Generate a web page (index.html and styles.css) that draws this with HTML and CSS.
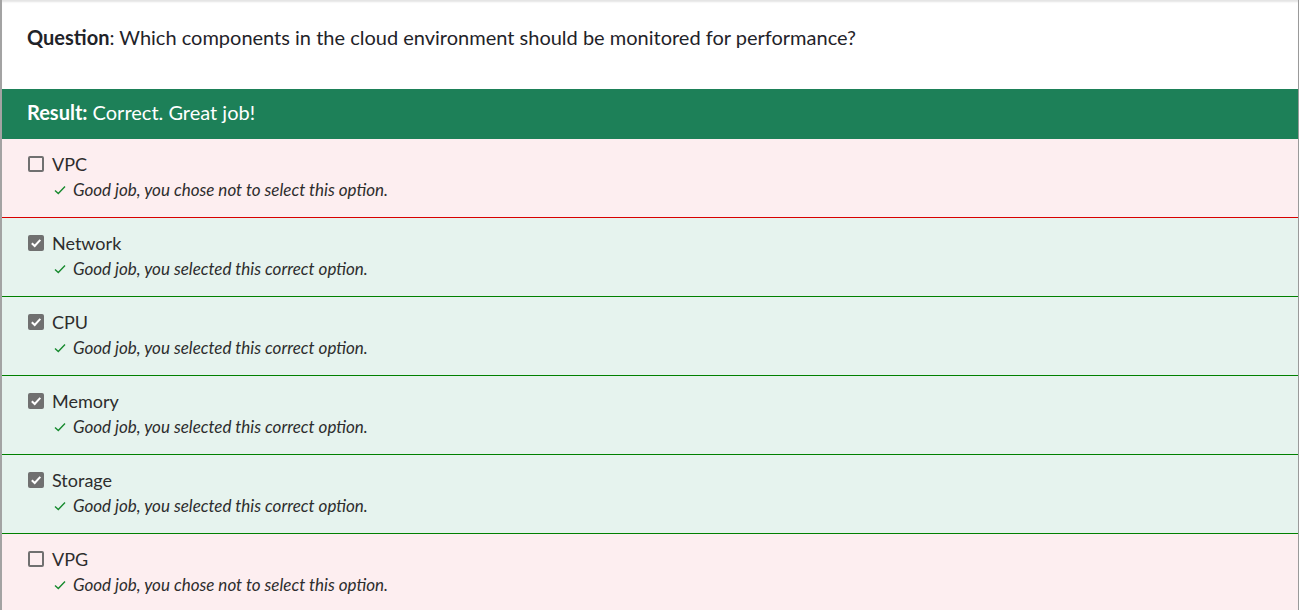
FILE: index.html
```html
<!DOCTYPE html>
<html>
<head>
<meta charset="utf-8">
<link rel="stylesheet" href="styles.css">
</head>
<body>
<div class="quiz">
  <div class="question"><strong>Question</strong>: Which components in the cloud environment should be monitored for performance?</div>
  <div class="result"><strong>Result:</strong> Correct. Great job!</div>
  <ul class="options">
    <li class="option wrong">
      <div class="label"><span class="box"></span>VPC</div>
      <div class="feedback"><svg class="tick" viewBox="0 0 12 10" width="12" height="10"><path d="M1 5.5 L4.3 8.5 L11 1.5" fill="none" stroke="#178a2e" stroke-width="1.4"/></svg>Good job, you chose not to select this option.</div>
    </li>
    <li class="option right">
      <div class="label"><span class="box checked"><svg viewBox="0 0 16 16" width="16" height="16"><path d="M3.8 8.2 L6.7 11 L12.3 4.9" fill="none" stroke="#fff" stroke-width="2"/></svg></span>Network</div>
      <div class="feedback"><svg class="tick" viewBox="0 0 12 10" width="12" height="10"><path d="M1 5.5 L4.3 8.5 L11 1.5" fill="none" stroke="#178a2e" stroke-width="1.4"/></svg>Good job, you selected this correct option.</div>
    </li>
    <li class="option right">
      <div class="label"><span class="box checked"><svg viewBox="0 0 16 16" width="16" height="16"><path d="M3.8 8.2 L6.7 11 L12.3 4.9" fill="none" stroke="#fff" stroke-width="2"/></svg></span>CPU</div>
      <div class="feedback"><svg class="tick" viewBox="0 0 12 10" width="12" height="10"><path d="M1 5.5 L4.3 8.5 L11 1.5" fill="none" stroke="#178a2e" stroke-width="1.4"/></svg>Good job, you selected this correct option.</div>
    </li>
    <li class="option right">
      <div class="label"><span class="box checked"><svg viewBox="0 0 16 16" width="16" height="16"><path d="M3.8 8.2 L6.7 11 L12.3 4.9" fill="none" stroke="#fff" stroke-width="2"/></svg></span>Memory</div>
      <div class="feedback"><svg class="tick" viewBox="0 0 12 10" width="12" height="10"><path d="M1 5.5 L4.3 8.5 L11 1.5" fill="none" stroke="#178a2e" stroke-width="1.4"/></svg>Good job, you selected this correct option.</div>
    </li>
    <li class="option right">
      <div class="label"><span class="box checked"><svg viewBox="0 0 16 16" width="16" height="16"><path d="M3.8 8.2 L6.7 11 L12.3 4.9" fill="none" stroke="#fff" stroke-width="2"/></svg></span>Storage</div>
      <div class="feedback"><svg class="tick" viewBox="0 0 12 10" width="12" height="10"><path d="M1 5.5 L4.3 8.5 L11 1.5" fill="none" stroke="#178a2e" stroke-width="1.4"/></svg>Good job, you selected this correct option.</div>
    </li>
    <li class="option wrong">
      <div class="label"><span class="box"></span>VPG</div>
      <div class="feedback"><svg class="tick" viewBox="0 0 12 10" width="12" height="10"><path d="M1 5.5 L4.3 8.5 L11 1.5" fill="none" stroke="#178a2e" stroke-width="1.4"/></svg>Good job, you chose not to select this option.</div>
    </li>
  </ul>
</div>
</body>
</html>
```
FILE: styles.css
```css
html, body {
  margin: 0;
  padding: 0;
  background: #fff;
}
body {
  font-family: Lato, "Open Sans", sans-serif;
  color: #2d3b45;
}
.quiz {
  width: 1296px;
  height: 610px;
  overflow: hidden;
  border-left: 2px solid #a3a3a3;
  border-right: 1px solid #9a9a9a;
  box-sizing: content-box;
  box-shadow: inset 0 3px 2px -1px #e4e4e4;
}
.question {
  height: 89px;
  box-sizing: border-box;
  padding: 25px 0 0 25px;
  font-size: 20px;
  line-height: 24px;
  color: #1f2329;
}
.question strong { font-weight: 700; }
.result {
  height: 50px;
  box-sizing: border-box;
  background: #1d8058;
  color: #fff;
  font-size: 20px;
  line-height: 24px;
  padding: 11px 0 0 25px;
}
.result strong { font-weight: 700; }
.options {
  list-style: none;
  margin: 0;
  padding: 0;
}
.option {
  height: 79px;
  box-sizing: border-box;
  padding: 13px 0 0 26px;
}
.option.wrong {
  background: #fdeef0;
  border-bottom: 1px solid #d80000;
}
.option.right {
  background: #e6f3ee;
  border-bottom: 1px solid #008000;
}
.label {
  display: flex;
  align-items: center;
  gap: 8px;
  font-size: 18px;
  line-height: 24px;
  color: #2d2d2d;
}
.box {
  width: 16px;
  height: 16px;
  box-sizing: border-box;
  border: 2px solid #707070;
  border-radius: 2px;
  display: inline-flex;
}
.box.checked {
  background: #707070;
  border: none;
}
.feedback {
  display: flex;
  align-items: center;
  gap: 7px;
  margin: 3px 0 0 26px;
  font-style: italic;
  font-size: 17px;
  line-height: 21px;
  color: #2d2d2d;
}
.tick { flex: none; }
```
